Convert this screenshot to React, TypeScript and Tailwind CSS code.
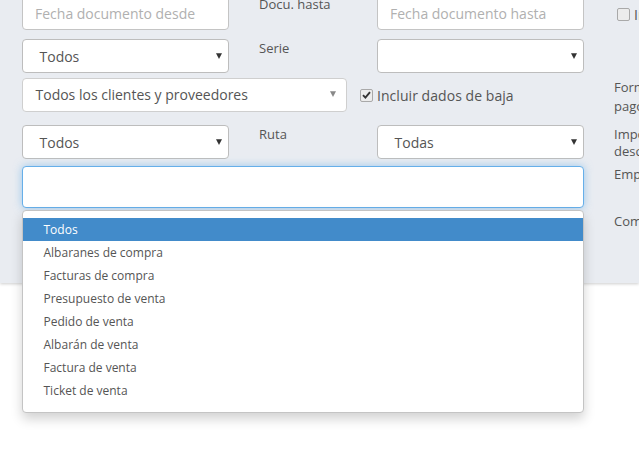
const font = "font-['Open_Sans',sans-serif]";

function Arrow({ color = '#333' }: { color?: string }) {
  return (
    <svg width="6" height="6" viewBox="0 0 6 6" className="shrink-0">
      <path d="M0 0.3H6L3 6Z" fill={color} />
    </svg>
  );
}

function Select({ value }: { value?: string }) {
  return (
    <div className="flex h-[34px] w-[207px] shrink-0 items-center justify-between rounded-[4px] border border-[#bdbdbd] bg-white pl-[16.5px] pr-[6px] text-[14px] text-[#555]">
      <span>{value}</span>
      <Arrow />
    </div>
  );
}

function Input({ placeholder }: { placeholder: string }) {
  return (
    <div className="flex h-[34px] w-[207px] shrink-0 items-center rounded-[4px] border border-[#c4c4c4] bg-white px-[12px] text-[14px] text-[#b0b0b0]">
      {placeholder}
    </div>
  );
}

const items = [
  'Todos',
  'Albaranes de compra',
  'Facturas de compra',
  'Presupuesto de venta',
  'Pedido de venta',
  'Albarán de venta',
  'Factura de venta',
  'Ticket de venta',
];

export default function App() {
  return (
    <div className={`relative h-[451px] w-[639px] overflow-hidden bg-white text-[#555] ${font}`}>
      <div className="h-[283px] overflow-hidden bg-[#e9ecf1] pl-[22px] shadow-[0_1px_3px_rgba(0,0,0,0.2)]">
        <div className="-mt-1 flex h-[34px] w-[900px]">
          <Input placeholder="Fecha documento desde" />
          <div className="ml-[30px] w-[118px] text-[13px] leading-[17px]">Docu. hasta</div>
          <Input placeholder="Fecha documento hasta" />
          <div className="ml-[33px] flex items-center gap-[4px] self-center pt-[2px] text-[14px]">
            <span className="h-[13px] w-[13px] rounded-[2px] border border-[#a9a9a9] bg-[#ececec]" />
            <span>Incluir</span>
          </div>
        </div>

        <div className="mt-[9px] flex h-[34px] w-[900px]">
          <Select value="Todos" />
          <div className="ml-[30px] mt-[1px] w-[118px] text-[13px] leading-[17px]">Serie</div>
          <Select />
        </div>

        <div className="mt-[5px] flex h-[34px] w-[900px]">
          <div className="flex h-[34px] w-[325px] shrink-0 items-center justify-between rounded-[4px] border border-[#cfcfcf] bg-white pb-[2px] pl-[12.5px] pr-[10px] text-[14px] text-[#555]">
            <span>Todos los clientes y proveedores</span>
            <Arrow color="#888" />
          </div>
          <div className="ml-[13px] flex w-[254px] items-center gap-[4px] text-[14px]">
            <span className="flex h-[13px] w-[13px] items-center justify-center rounded-[2px] border border-[#a9a9a9] bg-[#ececec]">
              <svg width="9" height="8" viewBox="0 0 9 8">
                <path d="M1 4.2L3.4 6.6L8 1.2" fill="none" stroke="#333" strokeWidth="1.9" />
              </svg>
            </span>
            <span className="tracking-[0.05px]">Incluir dados de baja</span>
          </div>
          <div className="text-[13px] leading-[19px]">
            Forma de
            <br />
            pago
          </div>
        </div>

        <div className="mt-[13px] flex h-[34px] w-[900px]">
          <Select value="Todos" />
          <div className="ml-[30px] mt-[1px] w-[118px] text-[13px] leading-[17px]">Ruta</div>
          <Select value="Todas" />
          <div className="ml-[30px] mt-[1px] text-[13px] leading-[17px]">
            Importe
            <br />
            descuento
          </div>
        </div>

        <div className="mt-[7px] flex h-[42px] w-[900px]">
          <div className="h-[42px] w-[562px] shrink-0 rounded-[4px] border border-[#66afe9] bg-white shadow-[0_0_8px_rgba(102,175,233,0.6)]" />
          <div className="ml-[30px] text-[13px] leading-[17px]">Empresa</div>
        </div>

        <div className="ml-[592px] mt-[5px] text-[13px] leading-[17px]">Comercial</div>
      </div>

      <ul className="absolute left-[22px] top-[210px] w-[562px] rounded-[4px] border border-[#c4c4c4] bg-white pb-[10px] pt-[7px] text-[12px] leading-[23px] text-[#555] shadow-[0_6px_12px_rgba(0,0,0,0.18)]">
        {items.map((t, i) => (
          <li key={t} className={`pl-[20.5px] ${i === 0 ? 'bg-[#428bca] text-white' : ''}`}>
            {t}
          </li>
        ))}
      </ul>
    </div>
  );
}
